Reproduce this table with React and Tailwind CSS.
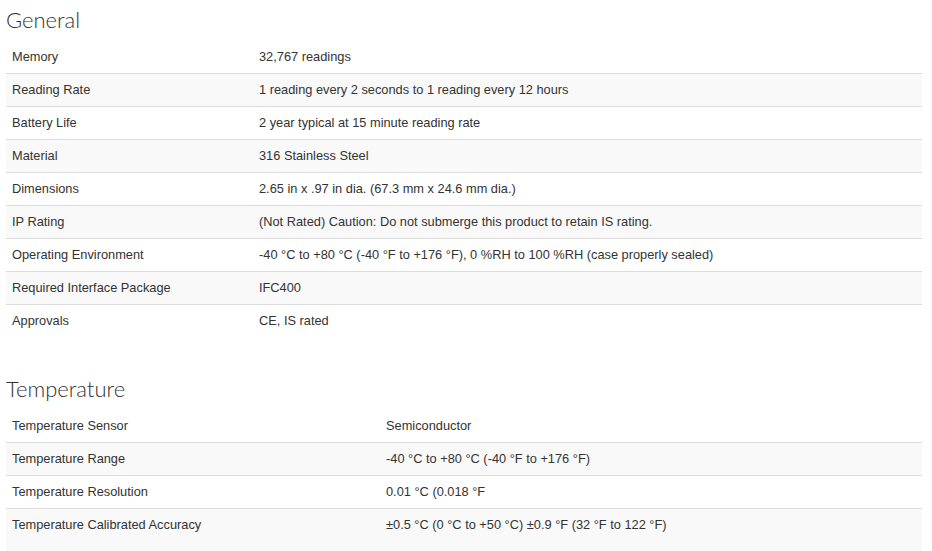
import React from "react";

const general = [
  ["Memory", "32,767 readings"],
  ["Reading Rate", "1 reading every 2 seconds to 1 reading every 12 hours"],
  ["Battery Life", "2 year typical at 15 minute reading rate"],
  ["Material", "316 Stainless Steel"],
  ["Dimensions", "2.65 in x .97 in dia. (67.3 mm x 24.6 mm dia.)"],
  ["IP Rating", "(Not Rated) Caution: Do not submerge this product to retain IS rating."],
  [
    "Operating Environment",
    "-40 °C to +80 °C (-40 °F to +176 °F), 0 %RH to 100 %RH (case properly sealed)",
  ],
  ["Required Interface Package", "IFC400"],
  ["Approvals", "CE, IS rated"],
];

const temperature = [
  ["Temperature Sensor", "Semiconductor"],
  ["Temperature Range", "-40 °C to +80 °C (-40 °F to +176 °F)"],
  ["Temperature Resolution", "0.01 °C (0.018 °F"],
  ["Temperature Calibrated Accuracy", "±0.5 °C (0 °C to +50 °C) ±0.9 °F (32 °F to 122 °F)"],
];

// striped table, first row has no top border
const SpecTable = ({ rows, labelWidth, lastTall }) => (
  <table className="w-[916px] table-fixed border-collapse">
    <colgroup>
      <col className={labelWidth} />
      <col />
    </colgroup>
    <tbody>
      {rows.map(([label, value], i) => {
        const last = lastTall && i === rows.length - 1;
        return (
          <tr
            key={label}
            className={`${i % 2 === 1 ? "bg-[#f9f9f9]" : "bg-white"} ${
              i > 0 ? "border-t border-[#dddddd]" : ""
            }`}
          >
            <td className={`pl-[6px] pr-2 pt-2 ${last ? "pb-[24px] align-top" : "pb-2"} leading-4`}>
              {label}
            </td>
            <td className={`pl-[6px] pr-2 pt-2 ${last ? "pb-[24px] align-top" : "pb-2"} leading-4`}>
              {value}
            </td>
          </tr>
        );
      })}
    </tbody>
  </table>
);

const Heading = ({ children, className }) => (
  <h2
    className={`h-6 leading-6 text-[22px] font-light text-[#333333] mb-[9px] ${className}`}
    style={{ fontFamily: 'Lato, "Open Sans", sans-serif' }}
  >
    {children}
  </h2>
);

export default function App() {
  return (
    <div
      className="w-[932px] h-[551px] overflow-hidden bg-white px-[6px] text-[12.8px] text-[#333333]"
      style={{ fontFamily: '"Liberation Sans", Arial, sans-serif' }}
    >
      {/* General */}
      <Heading className="pt-[8px] h-auto">General</Heading>
      <SpecTable rows={general} labelWidth="w-[247px]" />

      {/* Temperature */}
      <Heading className="mt-[40px]">Temperature</Heading>
      <SpecTable rows={temperature} labelWidth="w-[374px]" lastTall />
    </div>
  );
}
